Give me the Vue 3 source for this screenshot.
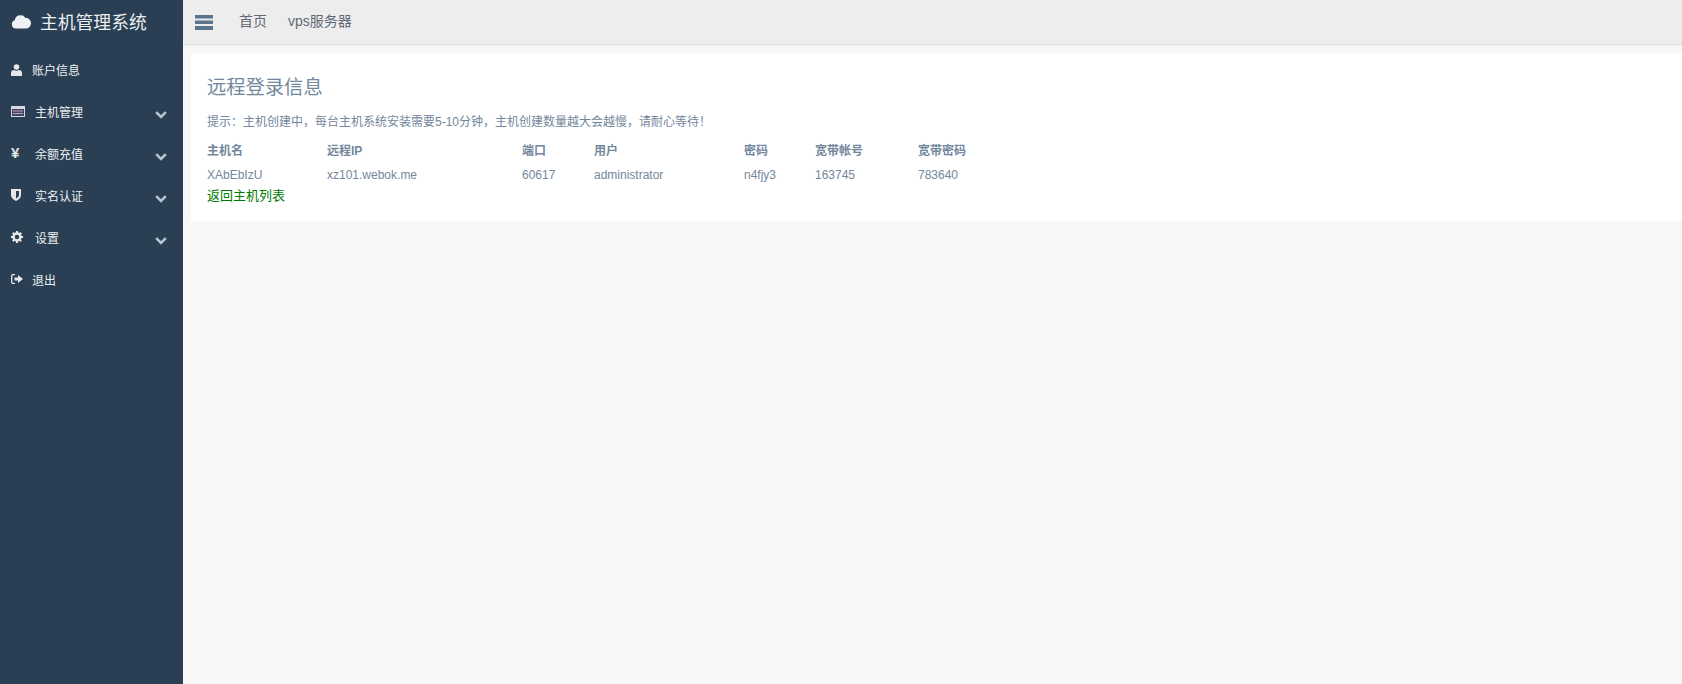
<script setup>
const menu = [
  { label: '账户信息', icon: 'user' },
  { label: '主机管理', icon: 'table', sub: true },
  { label: '余额充值', icon: 'yen', sub: true },
  { label: '实名认证', icon: 'shield', sub: true },
  { label: '设置', icon: 'cog', sub: true },
  { label: '退出', icon: 'out' },
]
const cols = [
  { h: '主机名', v: 'XAbEbIzU', w: 120 },
  { h: '远程IP', v: 'xz101.webok.me', w: 195 },
  { h: '端口', v: '60617', w: 72 },
  { h: '用户', v: 'administrator', w: 150 },
  { h: '密码', v: 'n4fjy3', w: 71 },
  { h: '宽带帐号', v: '163745', w: 103 },
  { h: '宽带密码', v: '783640', w: 60 },
]
</script>

<template>
  <div class="page">
    <aside class="side">
      <div class="brand">
        <svg class="cloud" width="20" height="15" viewBox="0 0 20 15"><path fill="#eef2f5" d="M5 14.500a4.200 4.200 0 0 1-1.200-8.200A5.200 5.200 0 0 1 9.600 1.400c1.900-.6 3.800.6 4.400 2.500a5.300 5.300 0 0 1 1.300 10.600z"/></svg>
        <span class="brand-text">主机管理系统</span>
      </div>
      <ul class="menu">
        <li v-for="m in menu" :key="m.label" :class="['item', { sub: m.sub }]">
          <span class="ic">
            <svg v-if="m.icon === 'user'" class="user" width="11" height="12" viewBox="0 0 11 12"><circle cx="5.500" cy="3" r="2.800" fill="#e7e7e7"/><path fill="#e7e7e7" d="M0 12V9c0-2 1.500-3 3-3 1.500 1 3.500 1 5 0 1.500 0 3 1 3 3v3z"/></svg>
            <svg v-else-if="m.icon === 'table'" width="14" height="11" viewBox="0 0 14 11"><rect x=".5" y=".5" width="13" height="10" fill="#3a4668" stroke="#d8d8e0"/><rect x="1" y="1" width="12" height="2" fill="#d8d8e0"/><path stroke="#c8a0b8" d="M2 5h10M2 7.500h10"/></svg>
            <span v-else-if="m.icon === 'yen'" class="yen">¥</span>
            <svg v-else-if="m.icon === 'shield'" width="10" height="12" viewBox="0 0 10 12"><path fill="#e7e7e7" d="M0 0h10v6c0 3-3 5-5 6-2-1-5-3-5-6z"/><path fill="#2a3f54" d="M5 2h3v4c0 1.500-1.500 2.800-3 3.500z"/></svg>
            <svg v-else-if="m.icon === 'cog'" width="12" height="12" viewBox="0 0 12 12"><circle cx="6" cy="6" r="3.500" fill="none" stroke="#e7e7e7" stroke-width="2.500"/><path stroke="#e7e7e7" stroke-width="2" stroke-dasharray="2 8 2" fill="none" d="M6 0v12M0 6h12M1.800 1.800l8.400 8.400M10.200 1.800l-8.400 8.400"/><circle cx="6" cy="6" r="1.300" fill="#2a3f54"/></svg>
            <svg v-else width="12" height="10" viewBox="0 0 12 10"><path fill="none" stroke="#e7e7e7" stroke-width="1.300" d="M4 .7H1.500a1 1 0 0 0-.8.8v7a1 1 0 0 0 .8.800H4"/><path fill="#e7e7e7" d="M3.500 3.500H7V1l5 4-5 4V6.500H3.500z"/></svg>
          </span>
          <span class="label">{{ m.label }}</span>
          <svg v-if="m.sub" class="chev" width="12" height="8" viewBox="0 0 12 8"><path fill="none" stroke="#b8c7ce" stroke-width="2.600" d="M1.200 1.200 6 6l4.800-4.800"/></svg>
        </li>
      </ul>
    </aside>
    <div class="main">
      <header class="top">
        <svg class="burger" width="18" height="15" viewBox="0 0 18 15"><path fill="#5a738e" d="M0 0h18v3.500H0zM0 5.500h18v3.500H0zM0 11h18v4H0z"/></svg>
        <a class="nav">首页</a>
        <a class="nav">vps服务器</a>
      </header>
      <section class="panel">
        <h3 class="title">远程登录信息</h3>
        <p class="tip">提示：主机创建中，每台主机系统安装需要5-10分钟，主机创建数量越大会越慢，请耐心等待！</p>
        <div class="table">
          <div v-for="c in cols" :key="c.h" class="col" :style="{ width: c.w + 'px' }">
            <div class="th">{{ c.h }}</div>
            <div class="td">{{ c.v }}</div>
          </div>
        </div>
        <a class="back">返回主机列表</a>
      </section>
    </div>
  </div>
</template>

<style>
html, body { margin: 0; background: #f7f7f7; }
</style>

<style scoped>
.page { display: flex; height: 684px; overflow: hidden; font-family: "Liberation Sans", "Noto Sans CJK SC", sans-serif; color: #73879c; font-size: 12px; }
.side { width: 183px; flex: none; background: #2a3f54; color: #ecf0f1; }
.brand { height: 44px; display: flex; align-items: center; padding-left: 11px; gap: 9px; font-size: 17.8px; color: #ecf0f1; }
.brand-text { margin-bottom: 2px; }
.cloud { flex: none; margin-bottom: 2px; }
.menu { list-style: none; margin: 4px 0 0; padding: 0; }
.item { height: 42px; display: flex; align-items: center; padding-left: 11px; position: relative; color: #ecf0f1; }
.ic { width: 21px; height: 14px; display: flex; align-items: center; flex: none; }
.user { margin-top: 2px; }
.sub .ic { width: 24px; }
.sub .label { margin-top: 1px; }
.yen { font-weight: 700; font-size: 15px; line-height: 14px; color: #e7e7e7; }
.label { font-size: 12px; }
.chev { position: absolute; left: 155px; top: 21px; }
.main { flex: 1; min-width: 0; display: flex; flex-direction: column; }
.top { height: 45px; box-sizing: border-box; background: #ededed; border-bottom: 1px solid #d9dee4; display: flex; align-items: center; padding-left: 12px; }
.burger { margin-right: 26px; }
.nav { font-size: 14px; color: #5e6974; margin-right: 21px; margin-bottom: 4px; }
.panel { margin: 8px 0 0 8px; background: #fff; height: 168px; box-sizing: border-box; padding: 0 16px; }
.title { margin: 0; padding-top: 25px; font-size: 19.3px; line-height: 20px; font-weight: 400; color: #73879c; }
.tip { margin: 16px 0 0; font-size: 12px; line-height: 17px; }
.table { display: flex; margin-top: 12px; }
.col { flex: none; }
.th { font-weight: 700; line-height: 17px; height: 24px; }
.td { line-height: 17px; }
.back { display: block; font-size: 13px; color: #007a00; line-height: 20px; margin-top: 2px; }
</style>
